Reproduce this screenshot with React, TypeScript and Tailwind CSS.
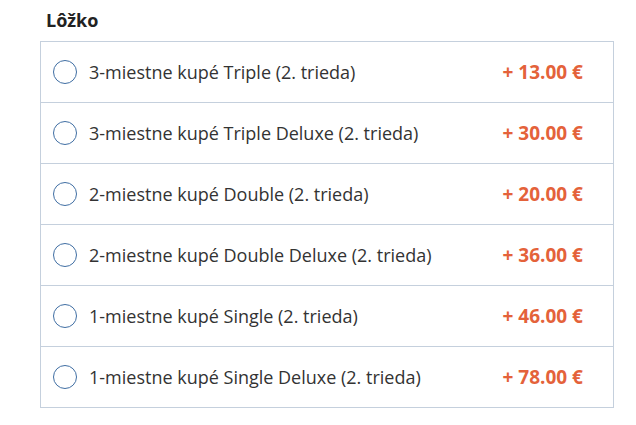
import React from 'react';

const options = [
  { label: '3-miestne kupé Triple (2. trieda)', price: '+ 13.00 €' },
  { label: '3-miestne kupé Triple Deluxe (2. trieda)', price: '+ 30.00 €' },
  { label: '2-miestne kupé Double (2. trieda)', price: '+ 20.00 €' },
  { label: '2-miestne kupé Double Deluxe (2. trieda)', price: '+ 36.00 €' },
  { label: '1-miestne kupé Single (2. trieda)', price: '+ 46.00 €' },
  { label: '1-miestne kupé Single Deluxe (2. trieda)', price: '+ 78.00 €' },
];

export default function App() {
  return (
    <div className="w-[636px] h-[425px] bg-white font-['Open_Sans',sans-serif] pl-[40px] pt-[7px]">
      <h2 className="pl-[6px] text-[18px] leading-[26px] font-bold text-[#222] mb-[8px]">Lôžko</h2>
      <div className="w-[574px] border border-[#c5d0dd]">
        {options.map((o, i) => (
          <label
            key={o.label}
            className={`flex items-center pl-[12px] pr-[30px] cursor-pointer ${i > 0 ? 'h-[61px] border-t border-[#c5d0dd]' : 'h-[60px]'}`}
          >
            <span className="w-[24px] h-[24px] rounded-full border-[1.5px] border-[#3f6ea3] bg-white shrink-0" />
            <span className="ml-[12px] text-[18px] text-[#333] flex-1">{o.label}</span>
            <span className="text-[19px] font-bold text-[#e4623a]">{o.price}</span>
          </label>
        ))}
      </div>
    </div>
  );
}
